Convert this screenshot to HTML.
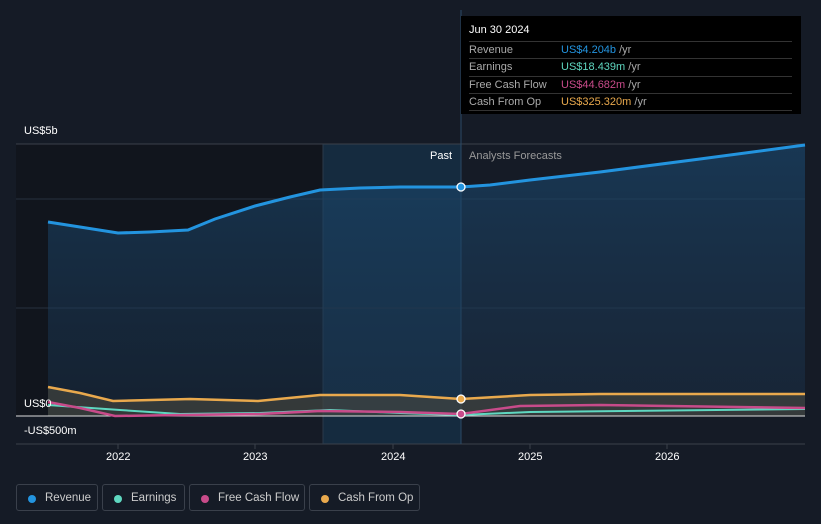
<!DOCTYPE html>
<html><head><style>
body{margin:0;width:821px;height:524px;background:#151b26;font-family:"Liberation Sans",sans-serif;overflow:hidden;position:relative}
.t{position:absolute;font-size:11px;color:#fff}
.tip{position:absolute;left:461px;top:16px;width:340px;height:98px;background:#000;font-size:11px}
.tip .row{position:absolute;left:8px;width:323px;border-top:1px solid #333;height:17px;line-height:17px;color:#aaa}
.tip .row span{position:absolute;left:92px}
.leg{position:absolute;top:484px;height:27px;border:1px solid #3a404b;border-radius:3px;color:#ccc;font-size:11.5px;line-height:27px;box-sizing:border-box}
.leg i{position:absolute;left:11px;top:10px;width:8px;height:8px;border-radius:50%}
</style></head><body>
<svg width="821" height="524" style="position:absolute;left:0;top:0">
<defs><linearGradient id="g" x1="0" y1="0" x2="0" y2="1"><stop offset="0" stop-color="#1b4a72" stop-opacity=".8"/><stop offset="1" stop-color="#1b3550" stop-opacity=".5"/></linearGradient></defs>
<rect x="16" y="144" width="307" height="272" fill="#11151d"/>
<rect x="323" y="144" width="138" height="300" fill="#16324a" opacity=".7"/>
<line x1="16" y1="144" x2="805" y2="144" stroke="#3a404b"/>
<line x1="16" y1="199" x2="805" y2="199" stroke="#27313f"/>
<line x1="16" y1="308" x2="805" y2="308" stroke="#27313f"/>
<line x1="16" y1="444" x2="805" y2="444" stroke="#3a404b"/>
<line x1="461" y1="10" x2="461" y2="444" stroke="#2a4a66"/>
<line x1="323" y1="144" x2="323" y2="444" stroke="#2a3a4a"/>
<path d="M48,222 L80,227 L118,233 L150,232 L188,230 L215,219 L255,206 L290,197 L320,190 L360,188 L400,187 L461,187 L490,185 L530,180 L600,172 L700,159 L805,145 L805,416 L48,416Z" fill="url(#g)" opacity=".75"/>
<path d="M48,387 L80,393 L113,401 L190,399 L258,401 L320,395 L400,395 L461,399 L530,395 L600,394 L805,394 L805,416 L48,416Z" fill="#4a4a40" opacity=".6"/>
<line x1="16" y1="416" x2="805" y2="416" stroke="#ddd" stroke-width="1"/>
<path d="M48,222 L80,227 L118,233 L150,232 L188,230 L215,219 L255,206 L290,197 L320,190 L360,188 L400,187 L461,187 L490,185 L530,180 L600,172 L700,159 L805,145" fill="none" stroke="#2394df" stroke-width="3"/>
<path d="M48,387 L80,393 L113,401 L190,399 L258,401 L320,395 L400,395 L461,399 L530,395 L600,394 L805,394" fill="none" stroke="#e9a94d" stroke-width="2.5"/>
<path d="M48,405 L120,410 L180,414 L260,413 L330,410 L400,413 L461,415 L530,412 L805,409" fill="none" stroke="#5fd7c0" stroke-width="2"/>
<path d="M48,402 L80,408 L115,416 L180,415 L260,414 L320,411 L400,412 L461,414 L520,406 L600,405 L805,408" fill="none" stroke="#c84b8a" stroke-width="2.5"/>
<circle cx="461" cy="187" r="4" fill="#2394df" stroke="#fff" stroke-width="1.3"/>
<circle cx="461" cy="399" r="4" fill="#e9a94d" stroke="#fff" stroke-width="1.3"/>
<circle cx="461" cy="414" r="4" fill="#c84b8a" stroke="#fff" stroke-width="1.3"/>
<g stroke="#3a404b"><line x1="118" y1="444" x2="118" y2="449"/><line x1="255" y1="444" x2="255" y2="449"/><line x1="393" y1="444" x2="393" y2="449"/><line x1="530" y1="444" x2="530" y2="449"/><line x1="667" y1="444" x2="667" y2="449"/></g>
</svg>
<div class="t" style="left:24px;top:125px">US$5b</div>
<div class="t" style="left:24px;top:398px">US$0</div>
<div class="t" style="left:24px;top:425px">-US$500m</div>
<div class="t" style="left:430px;top:150px">Past</div>
<div class="t" style="left:469px;top:150px;color:#999">Analysts Forecasts</div>
<div class="t" style="left:106px;top:451px">2022</div>
<div class="t" style="left:243px;top:451px">2023</div>
<div class="t" style="left:381px;top:451px">2024</div>
<div class="t" style="left:518px;top:451px">2025</div>
<div class="t" style="left:655px;top:451px">2026</div>
<div class="tip">
<div style="position:absolute;left:8px;top:8px;color:#fff">Jun 30 2024</div>
<div class="row" style="top:25px">Revenue<span><b style="font-weight:normal;color:#2394df">US$4.204b</b> /yr</span></div>
<div class="row" style="top:42px">Earnings<span><b style="font-weight:normal;color:#5fd7c0">US$18.439m</b> /yr</span></div>
<div class="row" style="top:60px">Free Cash Flow<span><b style="font-weight:normal;color:#c84b8a">US$44.682m</b> /yr</span></div>
<div class="row" style="top:77px">Cash From Op<span><b style="font-weight:normal;color:#e9a94d">US$325.320m</b> /yr</span></div>
<div class="row" style="top:94px;height:0"></div>
</div>
<div class="leg" style="left:16px;width:82px"><i style="background:#2394df"></i><span style="position:absolute;left:28px">Revenue</span></div>
<div class="leg" style="left:102px;width:83px"><i style="background:#5fd7c0"></i><span style="position:absolute;left:28px">Earnings</span></div>
<div class="leg" style="left:189px;width:116px"><i style="background:#c84b8a"></i><span style="position:absolute;left:28px">Free Cash Flow</span></div>
<div class="leg" style="left:309px;width:111px"><i style="background:#e9a94d"></i><span style="position:absolute;left:28px">Cash From Op</span></div>
</body></html>
